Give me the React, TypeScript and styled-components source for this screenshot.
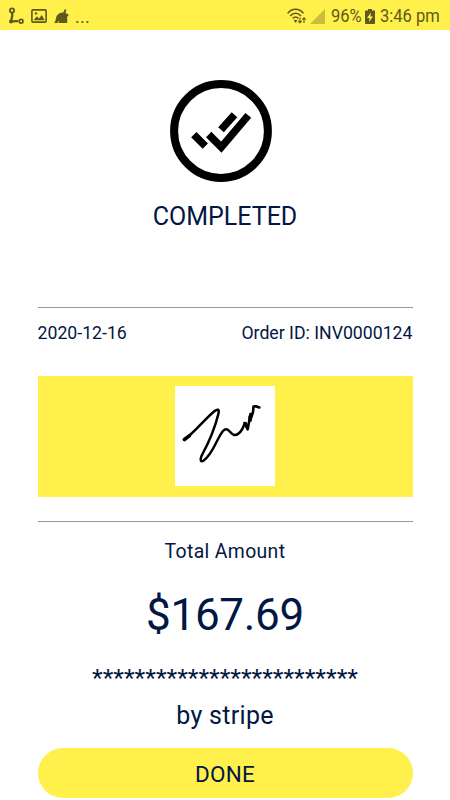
import React from 'react';
import styled, { createGlobalStyle } from "styled-components"

const App: React.FC = () => {
  return (
    <Screen>
      <GlobalStyle />

      {/* Status Bar */}
      <StatusBar>
        <StatusIcons $gap={7}>
          <RouteIcon />
          <PictureIcon />
          <CleanerIcon />
          <More>...</More>
        </StatusIcons>
        <StatusIcons $gap={3}>
          <WifiIcon />
          <SignalIcon />
          <Condensed $width={31}>96%</Condensed>
          <BatteryIcon />
          <Condensed $width={60}>3:46 pm</Condensed>
        </StatusIcons>
      </StatusBar>

      <Content>
        {/* Result */}
        <Result>
          <CompletedIcon />
          <Title>COMPLETED</Title>
        </Result>

        {/* Order */}
        <Divider />
        <OrderRow>
          <span>2020-12-16</span>
          <span>Order ID: INV0000124</span>
        </OrderRow>
        <SignaturePanel>
          <SignatureBox>
            <Signature />
          </SignatureBox>
        </SignaturePanel>
        <Divider />

        {/* Payment */}
        <TotalLabel>Total Amount</TotalLabel>
        <Total>$167.69</Total>
        <CardNumber>{"*".repeat(25)}</CardNumber>
        <Provider>by stripe</Provider>
        <DoneButton type="button">DONE</DoneButton>
      </Content>
    </Screen>
  );
}

export default App;

const RouteIcon = () => (
  <svg width="16" height="18" viewBox="0 0 16 18" fill="none" stroke="#5f5a1c">
    <path d="M4.2 6v3L3 14.4l7-.2" strokeWidth="2.3" strokeLinejoin="round" />
    <circle cx="4" cy="3.4" r="2.1" strokeWidth="1.8" />
    <circle cx="13.1" cy="14.3" r="1.9" strokeWidth="1.7" />
    <circle cx="3" cy="14.6" r="2" fill="#5f5a1c" stroke="none" />
  </svg>
)

const PictureIcon = () => (
  <svg width="16" height="14" viewBox="0 0 16 14">
    <rect x=".9" y=".9" width="14.2" height="12.2" rx=".8" fill="none" stroke="#5f5a1c" strokeWidth="1.6" />
    <path d="M2.6 11.2l3.2-4 2.2 2.3L10.8 6l2.9 5.2z" fill="#5f5a1c" />
    <circle cx="5" cy="4.4" r="1.2" fill="#5f5a1c" />
  </svg>
)

const CleanerIcon = () => (
  <svg width="15" height="15" viewBox="0 0 15 15" fill="#5f5a1c">
    <path d="M2.4 7.5C4 4.2 6.5 3.3 9.4 3.5L10.6.2l1.8.6-1 3.2 3.2 1.5-.4 1.6-1 .4V14H4.7l.6-2.5L3.5 14H.2C1.4 12.4 2 10 2.4 7.5z" />
  </svg>
)

const WifiIcon = () => (
  <svg width="20" height="17" viewBox="0 0 20 17" fill="none" stroke="#5f5a1c" strokeWidth="1.5">
    <path d="M.6 5.4C5-.2 12.2-.2 16.5 5.4" />
    <path d="M3.2 8C6.2 4.4 11 4.4 14 8" />
    <path d="M5.7 10.5c1.8-2 4-2 5.8 0" />
    <path d="M6.6 12.4l1.9 2.3 1.9-2.3c-1-1-2.8-1-3.800 0z" fill="#5f5a1c" stroke="none" />
    <path d="M13 9.5v5M11.3 13l1.7 1.8 1.7-1.8M17 15v-5M15.3 11.7L17 9.9l1.7 1.8" strokeWidth="1.1" />
  </svg>
)

const SignalIcon = () => (
  <svg width="15" height="15" viewBox="0 0 15 15">
    <path d="M15 0v15H0z" fill="#c8bd3c" />
  </svg>
)

const BatteryIcon = () => (
  <svg width="10" height="15" viewBox="0 0 10 15">
    <path d="M3 0h4v1.5h2.3q.7 0 .7.7v12q0 .8-.8.8H.8q-.8 0-.8-.8v-12q0-.7.7-.7H3z" fill="#5f5a1c" />
    <path d="M6 3.5L2 8.9h2.600L4 13l4-5.5H5.4z" fill="#fff04b" />
  </svg>
)

const CompletedIcon = () => (
  <svg width="102" height="102" viewBox="0 0 102 102" fill="none" stroke="#000">
    <circle cx="51" cy="51" r="46.9" strokeWidth="8" />
    <path d="M38.7 54.5l12.600 12.700 27-31.900" strokeWidth="7.5" />
    <path d="M23.8 54.6l11.500 11.600M64.5 34.8L51 49.8" strokeWidth="7.5" />
  </svg>
)

const Signature = () => (
  <svg width="100" height="100" viewBox="0 0 100 100" fill="none" stroke="#000" strokeLinecap="round" strokeLinejoin="round">
    <path d="M9.5 53.5C20 46 30 33 39 25.5c3.5-2.7 5.5-2.5 4.5 2C40 42 33 58 26.5 70c-1.8 4.5-.5 6.5 2.2 4.5C38 68 42 52 48 45c5-5.5 7 3 11 4 5 .5 8-4 10.500-11" strokeWidth="2.5" />
    <path d="M69.5 37l3.2 6.300L75.500 28l-.3 6.500 2.800-8.500.5-5.500 2.500-.3 3.300 1.300" strokeWidth="2.6" />
    <path d="M70.5 37.500l2 4M75 30.500v4" strokeWidth="3.2" />
    <path d="M9.5 53.5l5-3.8" strokeWidth="3.5" />
    <circle cx="9.3" cy="53.5" r="1.3" fill="#000" />
  </svg>
)

const GlobalStyle = createGlobalStyle`
  * {
    box-sizing: border-box;
  }

  body {
    margin: 0;
    background: #fff;
  }
`

const Screen = styled.div`
  width: 450px;
  height: 800px;
  overflow: hidden;
  background: #fff;
  color: #031744;
  font-family: Roboto, "Liberation Sans", sans-serif;
`

const StatusBar = styled.header`
  display: flex;
  justify-content: space-between;
  height: 30px;
  padding: 2px 10px 0 8px;
  background: #fff04b;
  color: #5f5a1c;
`

const StatusIcons = styled.div<{ $gap: number }>`
  display: flex;
  align-items: center;

  svg {
    flex: none;
  }

  svg + svg {
    margin-left: ${props => props.$gap}px;
  }
`

const More = styled.span`
  margin-left: 6px;
  font-size: 18px;
  letter-spacing: .3px;
`

// Narrow text, the box keeps the width it has after scaling
const Condensed = styled.span<{ $width: number }>`
  width: ${props => props.$width}px;
  margin: 0 3px 0 6px;
  font-size: 19.2px;
  line-height: 28px;
  white-space: nowrap;
  transform: scaleX(.86);
  transform-origin: left center;

  &:last-child {
    margin: 0 0 0 5px;
  }
`

const Content = styled.main`
  display: flex;
  flex-direction: column;
  padding: 0 37.5px;
`

const Result = styled.section`
  display: flex;
  flex-direction: column;
  align-items: center;
  height: 277px;
  padding-top: 50px;

  svg {
    margin-right: 8px;
  }
`

const Title = styled.h1`
  margin: 20px 0 0;
  font-size: 25px;
  font-weight: 400;
  line-height: 30px;
`

const Divider = styled.hr`
  width: 100%;
  height: 1px;
  margin: 0;
  border: 0;
  background: #999;
`

const OrderRow = styled.div`
  display: flex;
  justify-content: space-between;
  margin-top: 15px;
  font-size: 17.7px;
  line-height: 20px;
`

const SignaturePanel = styled.div`
  display: flex;
  justify-content: center;
  height: 121px;
  margin: 33px 0 24px;
  padding-top: 10px;
  background: #fff04b;
`

const SignatureBox = styled.div`
  width: 100px;
  height: 100px;
  background: #fff;
`

const Line = styled.div`
  text-align: center;
  white-space: nowrap;
`

const TotalLabel = styled(Line)`
  margin-top: 18px;
  font-size: 19.4px;
  line-height: 24px;
  letter-spacing: .35px;
`

const Total = styled(Line)`
  margin-top: 25px;
  font-size: 44px;
  line-height: 52px;
  letter-spacing: -.3px;
`

const CardNumber = styled(Line)`
  margin-top: 22px;
  font-size: 24.7px;
  line-height: 30px;
`

const Provider = styled(Line)`
  margin-top: 8px;
  font-size: 25px;
  line-height: 30px;
  letter-spacing: .3px;
`

const DoneButton = styled.button`
  height: 50px;
  margin-top: 17px;
  padding: 2px 0 0;
  border: 0;
  border-radius: 25px;
  background: #fff04b;
  color: #031744;
  font-family: inherit;
  font-size: 22.5px;
  letter-spacing: .2px;
`
